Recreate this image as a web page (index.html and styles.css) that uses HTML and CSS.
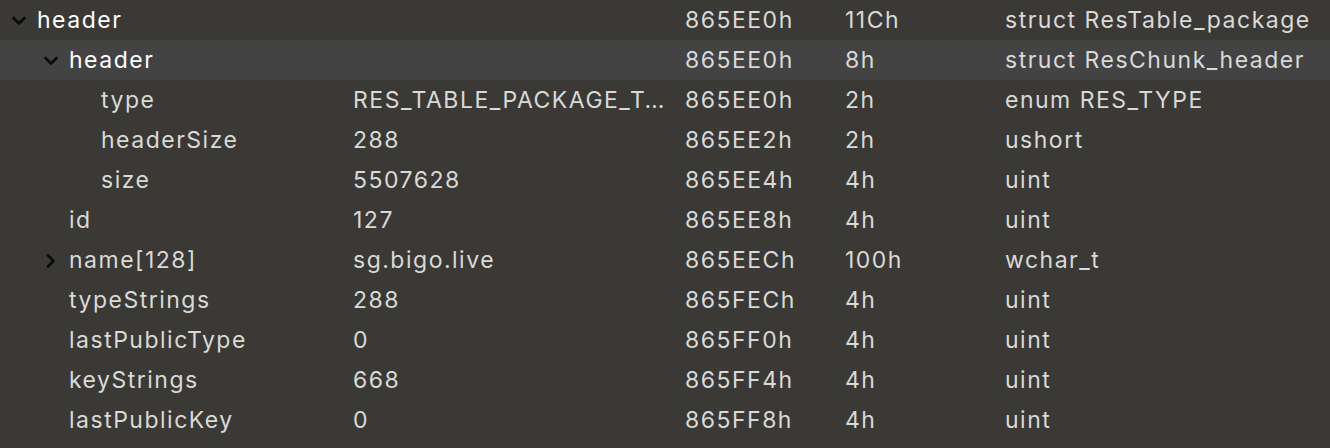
FILE: index.html
```html
<!DOCTYPE html>
<html>
<head>
<meta charset="utf-8">
<link rel="stylesheet" href="styles.css">
</head>
<body>
<div class="tree">
  <div class="row">
    <div class="c name l0"><span class="chev down"><svg viewBox="0 0 14 10" width="14" height="10"><path d="M1.5 2 L7 7.5 L12.5 2" /></svg></span><span class="hd">header</span></div>
    <div class="c val"></div><div class="c start">865EE0h</div><div class="c size">11Ch</div><div class="c type">struct ResTable_package</div>
  </div>
  <div class="row sel">
    <div class="c name l1"><span class="chev down"><svg viewBox="0 0 14 10" width="14" height="10"><path d="M1.5 2 L7 7.5 L12.5 2" /></svg></span><span class="hd">header</span></div>
    <div class="c val"></div><div class="c start">865EE0h</div><div class="c size">8h</div><div class="c type">struct ResChunk_header</div>
  </div>
  <div class="row">
    <div class="c name l2"><span class="chev"></span>type</div>
    <div class="c val" title="RES_TABLE_PACKAGE_TYPE">RES_TABLE_PACKAGE_T…</div><div class="c start">865EE0h</div><div class="c size">2h</div><div class="c type">enum RES_TYPE</div>
  </div>
  <div class="row">
    <div class="c name l2"><span class="chev"></span>headerSize</div>
    <div class="c val">288</div><div class="c start">865EE2h</div><div class="c size">2h</div><div class="c type">ushort</div>
  </div>
  <div class="row">
    <div class="c name l2"><span class="chev"></span>size</div>
    <div class="c val">5507628</div><div class="c start">865EE4h</div><div class="c size">4h</div><div class="c type">uint</div>
  </div>
  <div class="row">
    <div class="c name l1"><span class="chev"></span>id</div>
    <div class="c val">127</div><div class="c start">865EE8h</div><div class="c size">4h</div><div class="c type">uint</div>
  </div>
  <div class="row">
    <div class="c name l1"><span class="chev right"><svg viewBox="0 0 10 14" width="10" height="14"><path d="M2 1.5 L7.5 7 L2 12.5" /></svg></span>name[128]</div>
    <div class="c val">sg.bigo.live</div><div class="c start">865EECh</div><div class="c size">100h</div><div class="c type">wchar_t</div>
  </div>
  <div class="row">
    <div class="c name l1"><span class="chev"></span>typeStrings</div>
    <div class="c val">288</div><div class="c start">865FECh</div><div class="c size">4h</div><div class="c type">uint</div>
  </div>
  <div class="row">
    <div class="c name l1"><span class="chev"></span>lastPublicType</div>
    <div class="c val">0</div><div class="c start">865FF0h</div><div class="c size">4h</div><div class="c type">uint</div>
  </div>
  <div class="row">
    <div class="c name l1"><span class="chev"></span>keyStrings</div>
    <div class="c val">668</div><div class="c start">865FF4h</div><div class="c size">4h</div><div class="c type">uint</div>
  </div>
  <div class="row">
    <div class="c name l1"><span class="chev"></span>lastPublicKey</div>
    <div class="c val">0</div><div class="c start">865FF8h</div><div class="c size">4h</div><div class="c type">uint</div>
  </div>
</div>
</body>
</html>
```
FILE: styles.css
```css
html, body {
  margin: 0;
  padding: 0;
  background: #3a3935;
}
body {
  width: 1330px;
  height: 448px;
  overflow: hidden;
  font-family: "Inter", "Liberation Sans", sans-serif;
  font-size: 23px;
  letter-spacing: 1.5px;
  color: #d9d9d7;
}
.tree {
  display: flex;
  flex-direction: column;
}
.row {
  display: grid;
  grid-template-columns: 353px 332px 160px 160px 1fr;
  height: 40px;
  align-items: center;
  white-space: nowrap;
}
.row.sel {
  background: #434343;
}
.c {
  white-space: nowrap;
  line-height: 39px;
  padding-top: 1px;
}
.name {
  display: flex;
  align-items: center;
}
.l0 { padding-left: 10px; }
.l1 { padding-left: 42px; }
.l2 { padding-left: 74px; }
.chev {
  width: 27px;
  height: 39px;
  flex: none;
  display: flex;
  align-items: center;
}
.chev.down { padding-left: 2px; box-sizing: border-box; }
.chev.right { padding-left: 4px; box-sizing: border-box; }
.chev svg path {
  fill: none;
  stroke: #0a0a0a;
  stroke-width: 2.6;
  stroke-linecap: round;
  stroke-linejoin: round;
}
.hd {
  color: #ffffff;
}
```
